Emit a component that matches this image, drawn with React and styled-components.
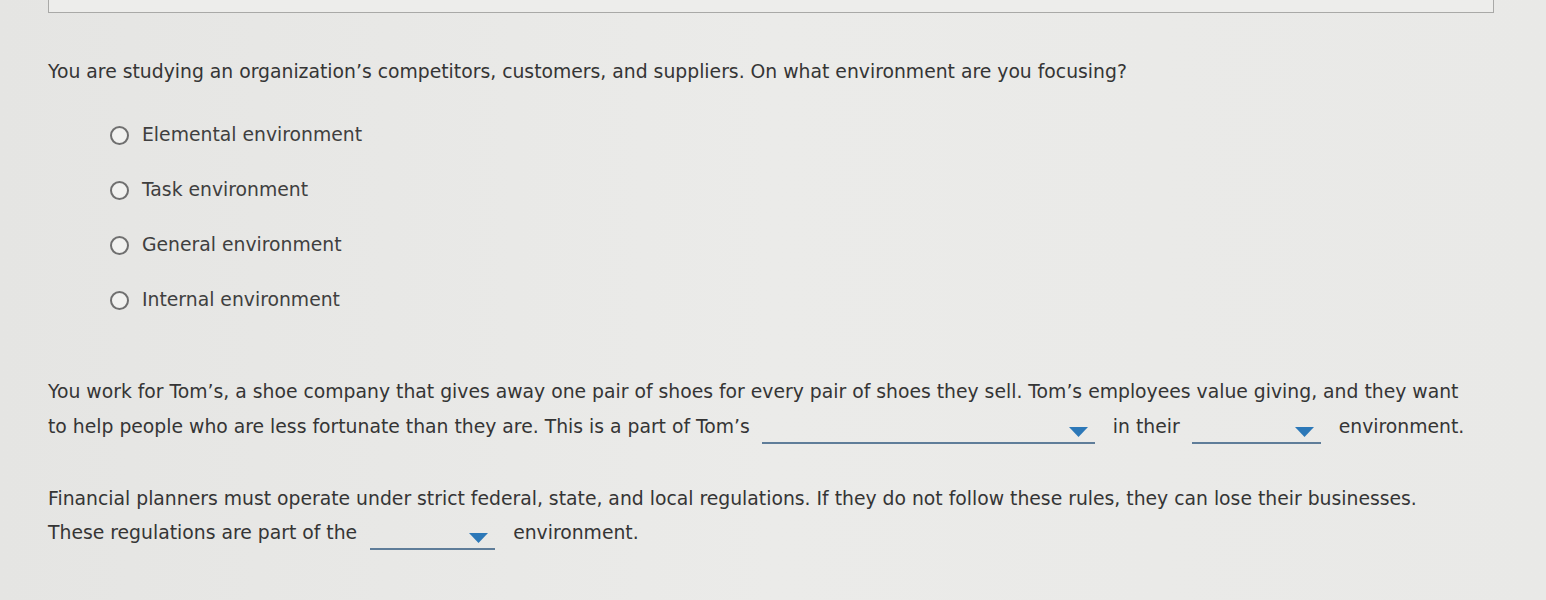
import React from "react";
import styled, { createGlobalStyle } from "styled-components";

const Global = createGlobalStyle`
  html, body { margin: 0; padding: 0; background: #e9e9e7; }
  body { font-family: "DejaVu Sans", Verdana, sans-serif; color: #353535; }
`;

const Page = styled.div`
  width: 1546px;
  height: 600px;
  overflow: hidden;
  padding: 0 52px 0 48px;
  box-sizing: border-box;
  background: linear-gradient(90deg, #e5e5e3 0%, #ebebe9 50%, #e9e9e7 100%);
`;

const TopBox = styled.div`
  height: 14px;
  margin-top: -2px;
  border: 1px solid #a9a9a7;
  border-top: none;
  background: #ededeb;
`;

const Question = styled.p`
  margin: ${(p) => p.$top}px 0 0;
  font-size: 18.8px;
  line-height: ${(p) => p.$lh || 24}px;
  white-space: nowrap;
`;

const Options = styled.div`
  display: flex;
  flex-direction: column;
  gap: 31px;
  margin: 39px 0 0 62px;
`;

const Option = styled.label`
  display: flex;
  align-items: center;
  gap: 13px;
  font-size: 18.8px;
  line-height: 24px;
  color: #3f3f3f;
`;

const Radio = styled.span`
  width: 15px;
  height: 15px;
  border: 2px solid #6f6f6f;
  border-radius: 50%;
  background: #f1f1ef;
`;

const Select = styled.span`
  display: inline-flex;
  justify-content: flex-end;
  align-items: center;
  width: ${(p) => p.$w}px;
  height: 22px;
  margin: 0 ${(p) => p.$mr}px 0 ${(p) => p.$ml}px;
  border-bottom: 2px solid #5f7d99;
  vertical-align: -5px;
  box-sizing: border-box;
  padding-right: 6px;
`;

const Arrow = styled.svg`
  width: 21px;
  height: 12px;
`;

const Drop = ({ w, ml = 12, mr = 18 }) => (
  <Select $w={w} $ml={ml} $mr={mr}>
    <Arrow viewBox="0 0 21 12">
      <path d="M1 1 L20 1 L10.5 11 Z" fill="#2c78b8" />
    </Arrow>
  </Select>
);

export default function App() {
  return (
    <>
      <Global />
      <Page>
        <TopBox />
        <Question $top={47}>
          You are studying an organization’s competitors, customers, and suppliers. On what environment are you focusing?
        </Question>
        <Options>
          <Option><Radio />Elemental environment</Option>
          <Option><Radio />Task environment</Option>
          <Option><Radio />General environment</Option>
          <Option><Radio />Internal environment</Option>
        </Options>
        <Question $top={62} $lh={35}>
          You work for Tom’s, a shoe company that gives away one pair of shoes for every pair of shoes they sell. Tom’s employees value giving, and they want
          <br />
          to help people who are less fortunate than they are. This is a part of Tom’s
          <Drop w={333} />
          in their
          <Drop w={129} />
          environment.
        </Question>
        <Question $top={38} $lh={34}>
          Financial planners must operate under strict federal, state, and local regulations. If they do not follow these rules, they can lose their businesses.
          <br />
          These regulations are part of the
          <Drop w={125} ml={13} />
          environment.
        </Question>
      </Page>
    </>
  );
}
